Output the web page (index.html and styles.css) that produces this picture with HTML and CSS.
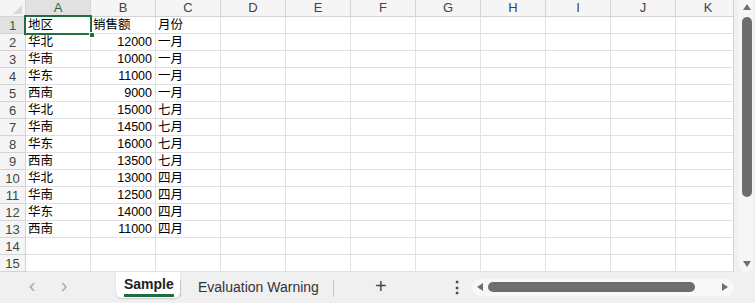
FILE: index.html
```html
<!DOCTYPE html>
<html lang="zh">
<head>
  <meta charset="UTF-8">
  <title>Sample</title>
  <link rel="stylesheet" href="styles.css">
</head>
<body>

  <div class="sheet">
    <!-- Grid -->
    <div class="grid">
      <div class="row head">
        <div class="corner"><span class="corner-mark"></span></div>
        <div class="col-head active">A</div>
        <div class="col-head">B</div>
        <div class="col-head">C</div>
        <div class="col-head">D</div>
        <div class="col-head">E</div>
        <div class="col-head">F</div>
        <div class="col-head">G</div>
        <div class="col-head">H</div>
        <div class="col-head">I</div>
        <div class="col-head">J</div>
        <div class="col-head">K</div>
      </div>
      <div id="rows"></div>
      <div class="selection"><span class="handle"></span></div>
    </div>

    <!-- Vertical scrollbar -->
    <div class="vscroll">
      <div class="vtrack">
        <span class="arrow-up"></span>
        <span class="vthumb"></span>
        <span class="arrow-down"></span>
      </div>
    </div>
  </div>

  <!-- Sheet tabs -->
  <div class="tabbar">
    <div class="nav">
      <span class="nav-btn">&lsaquo;</span>
      <span class="nav-btn">&rsaquo;</span>
    </div>
    <div class="tab current"><span>Sample</span></div>
    <div class="sep"></div>
    <div class="tab">Evaluation Warning</div>
    <div class="sep"></div>
    <div class="add">+</div>
    <div class="more">&#8942;</div>
    <div class="hscroll">
      <span class="arrow-left"></span>
      <span class="hthumb"></span>
      <span class="arrow-right"></span>
    </div>
  </div>

  <script>
    const data = [
      ["地区", "销售额", "月份"],
      ["华北", 12000, "一月"],
      ["华南", 10000, "一月"],
      ["华东", 11000, "一月"],
      ["西南", 9000, "一月"],
      ["华北", 15000, "七月"],
      ["华南", 14500, "七月"],
      ["华东", 16000, "七月"],
      ["西南", 13500, "七月"],
      ["华北", 13000, "四月"],
      ["华南", 12500, "四月"],
      ["华东", 14000, "四月"],
      ["西南", 11000, "四月"]
    ];

    const rows = document.getElementById("rows");
    for (let r = 0; r < 15; r++) {
      const row = document.createElement("div");
      row.className = "row";
      const head = document.createElement("div");
      head.className = "row-head" + (r === 0 ? " active" : "");
      head.textContent = r + 1;
      row.appendChild(head);
      for (let c = 0; c < 11; c++) {
        const cell = document.createElement("div");
        cell.className = "cell";
        const value = data[r] ? data[r][c] : undefined;
        if (value !== undefined) {
          cell.textContent = value;
          if (typeof value === "number") cell.classList.add("num");
        }
        row.appendChild(cell);
      }
      rows.appendChild(row);
    }
  </script>

</body>
</html>
```

FILE: styles.css
```css
* {
  box-sizing: border-box;
  margin: 0;
  padding: 0;
}

body {
  width: 755px;
  height: 303px;
  overflow: hidden;
  background: #f0f0f0;
  font-family: "Liberation Sans", Arial, "Noto Sans CJK SC", sans-serif;
  color: #000;
}

.sheet {
  display: flex;
  height: 272px;
}

/* Grid */
.grid {
  position: relative;
  width: 734px;
  height: 272px;
  overflow: hidden;
  background: #fff;
  border-right: 1px solid #d4d4d4;
}

.row {
  display: flex;
  height: 17px;
  width: 741px;
}

.corner,
.row-head,
.col-head {
  background: #f5f5f5;
  color: #444;
  font-size: 13px;
  border-right: 1px solid #d4d4d4;
  border-bottom: 1px solid #d4d4d4;
  display: flex;
  align-items: center;
  justify-content: center;
}

.corner {
  position: relative;
  width: 26px;
  flex: none;
}

.corner-mark {
  position: absolute;
  right: 3px;
  bottom: 2px;
  width: 0;
  height: 0;
  border-left: 9px solid transparent;
  border-bottom: 9px solid #d8d8d8;
}

.col-head {
  width: 65px;
  flex: none;
  line-height: 16px;
}

.row-head {
  width: 26px;
  flex: none;
}

.col-head.active,
.row-head.active {
  background: #e1e1e1;
  color: #1e6e42;
}

.col-head.active {
  border-bottom-color: #1e6e42;
}

.row-head.active {
  border-right-color: #1e6e42;
}

.cell {
  width: 65px;
  flex: none;
  border-right: 1px solid #e1e1e1;
  border-bottom: 1px solid #e1e1e1;
  font-size: 12.5px;
  line-height: 16px;
  padding: 0 2px 0 2px;
  white-space: nowrap;
  overflow: hidden;
}

.cell.num {
  text-align: right;
  padding-right: 3px;
}

.selection {
  position: absolute;
  left: 24px;
  top: 15px;
  width: 68px;
  height: 20px;
  border: 2px solid #1e6e42;
}

.handle {
  position: absolute;
  right: -5px;
  bottom: -5px;
  width: 6px;
  height: 6px;
  background: #1e6e42;
  border: 1px solid #fff;
}

/* Vertical scrollbar */
.vscroll {
  flex: 1;
  background: #f0f0f0;
  padding: 0 2px 0 4px;
}

.vtrack {
  position: relative;
  height: 272px;
  background: #f6f6f6;
  border-radius: 0 0 8px 8px;
}

.arrow-up,
.arrow-down {
  position: absolute;
  left: 5px;
  width: 0;
  height: 0;
  border-left: 4px solid transparent;
  border-right: 4px solid transparent;
}

.arrow-up {
  top: 4px;
  border-bottom: 6px solid #707070;
}

.arrow-down {
  top: 261px;
  border-top: 6px solid #707070;
}

.vthumb {
  position: absolute;
  left: 4px;
  top: 17px;
  width: 10px;
  height: 180px;
  background: #6e6e6e;
  border-radius: 5px;
}

/* Tab bar */
.tabbar {
  display: flex;
  align-items: flex-start;
  height: 31px;
  font-size: 14px;
  color: #333;
}

.nav {
  width: 116px;
  display: flex;
  padding: 2px 0 0 26px;
  gap: 20px;
}

.nav-btn {
  width: 12px;
  text-align: center;
  color: #a8a8a8;
  font-size: 20px;
  line-height: 22px;
}

.tab {
  height: 26px;
  padding: 7px 14px 0 17px;
  white-space: nowrap;
}

.tab.current {
  width: 64px;
  padding: 3px 0 0 8px;
  background: #fff;
  border-radius: 0 0 6px 6px;
  box-shadow: 0 1px 2px rgba(0, 0, 0, 0.15);
  font-weight: bold;
  color: #222;
}

.tab.current span {
  display: inline-block;
  padding-bottom: 1px;
  border-bottom: 3px solid #1e6e42;
  line-height: 18px;
}

.sep {
  width: 1px;
  height: 17px;
  margin: 8px 0 0 3px;
  background: #c8c8c8;
}

.tab + .sep {
  margin-left: 0;
}

.add {
  width: 94px;
  text-align: center;
  font-size: 20px;
  font-weight: 300;
  line-height: 28px;
  color: #444;
}

.more {
  width: 10px;
  margin-left: 21px;
  font-size: 16px;
  line-height: 31px;
  font-weight: bold;
  color: #444;
}

.hscroll {
  position: relative;
  margin: 7px 0 0 13px;
  width: 262px;
  height: 17px;
  background: #f8f8f8;
  border-radius: 8px;
}

.arrow-left,
.arrow-right {
  position: absolute;
  top: 4px;
  width: 0;
  height: 0;
  border-top: 4px solid transparent;
  border-bottom: 4px solid transparent;
}

.arrow-left {
  left: 5px;
  border-right: 6px solid #707070;
}

.arrow-right {
  right: 6px;
  border-left: 6px solid #707070;
}

.hthumb {
  position: absolute;
  left: 16px;
  top: 3px;
  width: 207px;
  height: 10px;
  background: #6e6e6e;
  border-radius: 5px;
}
```
